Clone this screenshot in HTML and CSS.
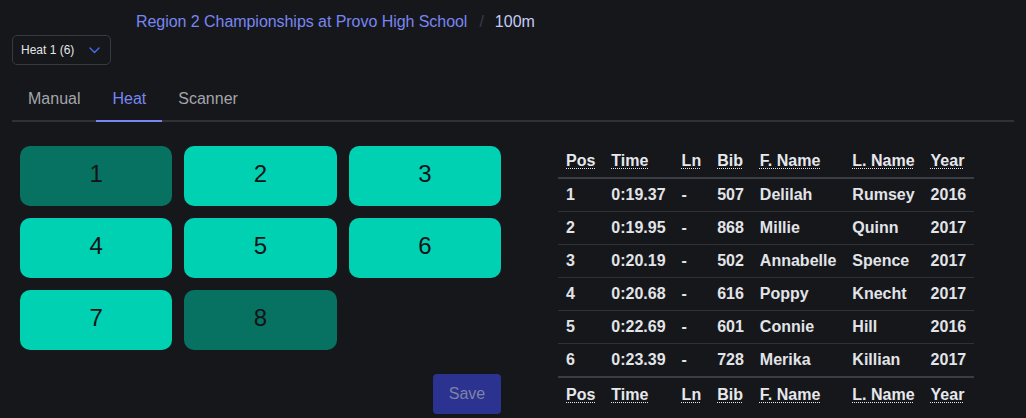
FILE: index.html
```html
<!DOCTYPE html>
<html lang="en">
<head>
<meta charset="utf-8">
<title>Heat results</title>
<link rel="stylesheet" href="styles.css">
</head>
<body>
<nav class="crumbs">
  <a class="crumb-link" href="#">Region 2 Championships at Provo High School</a>
  <span class="crumb-sep">/</span>
  <span class="crumb-current">100m</span>
</nav>
<div class="select">
  <span class="select-value">Heat 1 (6)</span>
  <svg class="select-chevron" width="11" height="7" viewBox="0 0 11 7"><polyline points="1,1 5.5,5.5 10,1" fill="none" stroke="#4c6ef5" stroke-width="1.3" stroke-linecap="round" stroke-linejoin="round"/></svg>
</div>
<div class="tabs">
  <span class="tab">Manual</span>
  <span class="tab tab-active">Heat</span>
  <span class="tab">Scanner</span>
</div>
<main class="panel">
  <section class="left">
    <div class="lanes">
      <button class="lane lane-done">1</button>
      <button class="lane">2</button>
      <button class="lane">3</button>
      <button class="lane">4</button>
      <button class="lane">5</button>
      <button class="lane">6</button>
      <button class="lane">7</button>
      <button class="lane lane-done">8</button>
    </div>
    <div class="actions"><button class="save">Save</button></div>
  </section>
  <section class="right">
    <table class="results">
      <thead>
        <tr><th><abbr title="Position">Pos</abbr></th><th><abbr title="Time">Time</abbr></th><th><abbr title="Lane">Ln</abbr></th><th><abbr title="Bib">Bib</abbr></th><th><abbr title="First name">F. Name</abbr></th><th><abbr title="Last name">L. Name</abbr></th><th><abbr title="Year">Year</abbr></th></tr>
      </thead>
      <tbody>
        <tr><td>1</td><td>0:19.37</td><td>-</td><td>507</td><td>Delilah</td><td>Rumsey</td><td>2016</td></tr>
        <tr><td>2</td><td>0:19.95</td><td>-</td><td>868</td><td>Millie</td><td>Quinn</td><td>2017</td></tr>
        <tr><td>3</td><td>0:20.19</td><td>-</td><td>502</td><td>Annabelle</td><td>Spence</td><td>2017</td></tr>
        <tr><td>4</td><td>0:20.68</td><td>-</td><td>616</td><td>Poppy</td><td>Knecht</td><td>2017</td></tr>
        <tr><td>5</td><td>0:22.69</td><td>-</td><td>601</td><td>Connie</td><td>Hill</td><td>2016</td></tr>
        <tr><td>6</td><td>0:23.39</td><td>-</td><td>728</td><td>Merika</td><td>Killian</td><td>2017</td></tr>
      </tbody>
      <tfoot>
        <tr><th><abbr title="Position">Pos</abbr></th><th><abbr title="Time">Time</abbr></th><th><abbr title="Lane">Ln</abbr></th><th><abbr title="Bib">Bib</abbr></th><th><abbr title="First name">F. Name</abbr></th><th><abbr title="Last name">L. Name</abbr></th><th><abbr title="Year">Year</abbr></th></tr>
      </tfoot>
    </table>
  </section>
</main>
</body>
</html>
```
FILE: styles.css
```css
html, body {
  margin: 0;
  padding: 0;
  background: #16171b;
  height: 100%;
  overflow: hidden;
}
body {
  font-family: "Liberation Sans", Arial, sans-serif;
  color: #c1c2c5;
  font-size: 16px;
}
.crumbs {
  display: flex;
  align-items: center;
  padding: 10px 0 0 136px;
  height: 24px;
  line-height: 24px;
}
.crumb-link {
  color: #7886f2;
  text-decoration: none;
  letter-spacing: -0.05px;
}
.crumb-sep {
  color: #3a3d45;
  margin: 0 11px 0 12px;
}
.crumb-current {
  color: #c5cbf7;
}
.select {
  box-sizing: border-box;
  margin: 1px 0 0 12px;
  width: 99px;
  height: 30px;
  border: 1px solid #373a40;
  border-radius: 5px;
  display: flex;
  align-items: center;
  padding: 0 0 1px 8px;
}
.select-value {
  font-size: 12px;
  color: #e4e5e8;
  flex: 1;
}
.select-chevron {
  margin-right: 10px;
  margin-top: 2px;
}
.tabs {
  display: flex;
  margin: 13px 12px 0 12px;
  border-bottom: 2px solid #2f3137;
}
.tab {
  padding: 10px 16px;
  line-height: 22px;
  color: #a3a5ab;
  margin-bottom: -2px;
  border-bottom: 2px solid transparent;
}
.tab-active {
  color: #7886f2;
  border-bottom-color: #7886f2;
}
.panel {
  display: flex;
  margin-top: 24px;
}
.left {
  width: 481px;
  margin-left: 20px;
}
.lanes {
  display: grid;
  grid-template-columns: repeat(3, 1fr);
  gap: 12px;
}
.lane {
  height: 60px;
  border: none;
  border-radius: 10px;
  background: #00d1b2;
  color: #111417;
  font-family: "Liberation Sans", Arial, sans-serif;
  font-size: 24px;
  padding: 0 0 5px 0;
}
.lane-done {
  background: #087262;
}
.actions {
  display: flex;
  justify-content: flex-end;
  margin-top: 24px;
}
.save {
  width: 68px;
  height: 40px;
  border: none;
  border-radius: 4px;
  background: #2c3290;
  color: #7d82a8;
  font-family: "Liberation Sans", Arial, sans-serif;
  font-size: 16px;
  padding: 0;
}
.right {
  padding-left: 57px;
  margin-top: -2px;
}
.results {
  border-collapse: collapse;
  font-weight: bold;
  color: #e2e4e8;
  line-height: 24px;
}
.results th, .results td {
  text-align: left;
  padding: 4px 8px 4px 8px;
  white-space: nowrap;
}
.results th {
  color: #e6e8ec;
  padding-top: 5px;
  padding-bottom: 5px;
}
.results thead th {
  padding-bottom: 4px;
}
.results abbr {
  text-decoration: underline dotted;
  text-decoration-thickness: 1px;
  text-underline-offset: 2px;
}
.results thead th {
  border-bottom: 2px solid #3a3d44;
}
.results tbody td {
  border-bottom: 1px solid #2f3137;
}
.results tbody tr:last-child td {
  border-bottom: none;
}
.results tfoot th {
  border-top: 2px solid #3a3d44;
}
```
